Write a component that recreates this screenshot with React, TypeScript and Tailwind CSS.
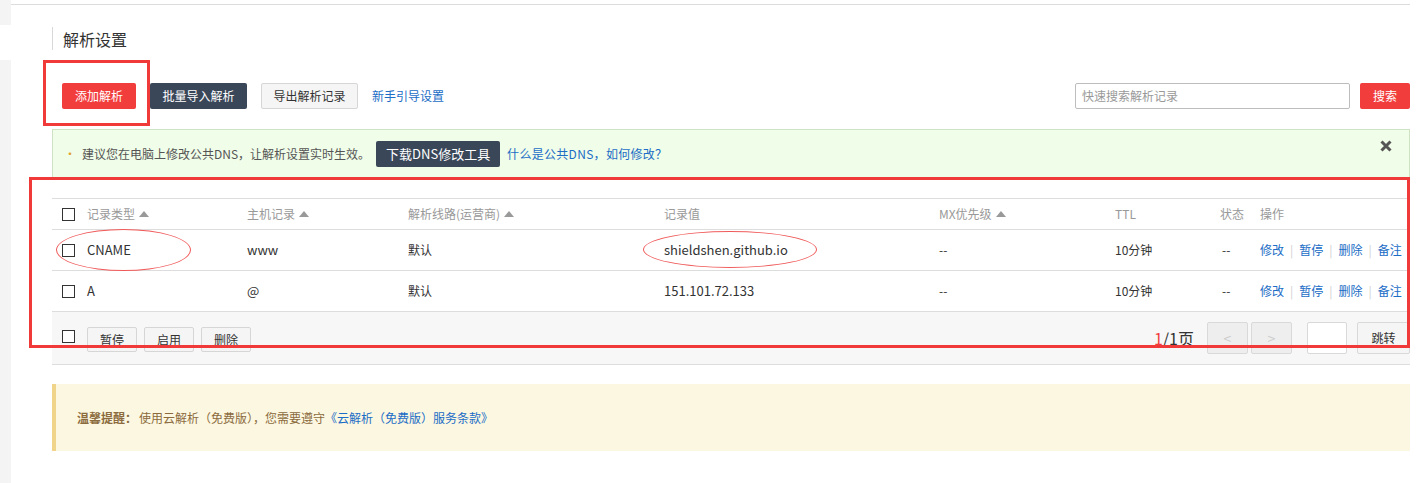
import React from 'react';

const font = { fontFamily: '"Noto Sans CJK SC", "Liberation Sans", sans-serif' };

const SortUp: React.FC = () => (
  <svg width="10" height="6" viewBox="0 0 10 6" className="ml-1 inline-block">
    <path d="M0 6 L5 0 L10 6 Z" fill="#999" />
  </svg>
);

const CheckBox: React.FC = () => (
  <span className="inline-block w-[13px] h-[13px] border border-[#333] bg-white" />
);

const cols = 'grid grid-cols-[35px_160px_161px_256px_275px_176px_105px_40px_1fr] items-center';

const records = [
  { type: 'CNAME', host: 'www', line: '默认', value: 'shieldshen.github.io', mx: '--', ttl: '10分钟', status: '--' },
  { type: 'A', host: '@', line: '默认', value: '151.101.72.133', mx: '--', ttl: '10分钟', status: '--' },
];

const Ops: React.FC = () => (
  <div className="flex items-center text-[#1b6dc6] whitespace-nowrap">
    <span>修改</span>
    <span className="mx-[6px] text-[#d0d0d0]">|</span>
    <span>暂停</span>
    <span className="mx-[6px] text-[#d0d0d0]">|</span>
    <span>删除</span>
    <span className="mx-[6px] text-[#d0d0d0]">|</span>
    <span>备注</span>
  </div>
);

export default function App() {
  return (
    <div className="relative w-[1421px] h-[483px] bg-white overflow-hidden flex text-[12px] text-[#333]" style={font}>
      {/* left strip */}
      <div className="w-[11px] flex flex-col">
        <div className="h-[25px] bg-[#f4f4f4]" />
        <div className="h-[35px] bg-white" />
        <div className="flex-1 bg-[#f4f4f4]" />
      </div>

      <div className="flex-1 pt-[4px] pr-[11px]">
        <div className="border-t border-[#dcdcdc] pl-[41px]">
          {/* title */}
          <div className="mt-[24px] h-[23px] border-l border-[#d8d8d8] pl-[10px] flex items-center text-[16px] text-[#333] -translate-y-[2px]">
            解析设置
          </div>

          {/* toolbar */}
          <div className="mt-[31px] flex items-center justify-between">
            <div className="flex items-center gap-[14px] pl-[10px]">
              <button className="w-[74px] h-[26px] bg-[#f23d3d] text-white rounded-[2px]">添加解析</button>
              <button className="w-[97px] h-[26px] bg-[#3a4759] text-white rounded-[2px]">批量导入解析</button>
              <button className="w-[97px] h-[26px] bg-[#f5f5f5] border border-[#d6d6d6] text-[#333] rounded-[2px]">导出解析记录</button>
              <span className="text-[#1b6dc6]">新手引导设置</span>
            </div>
            <div className="flex items-center gap-[10px]">
              <div className="w-[275px] h-[26px] border border-[#bdbdbd] rounded-[2px] flex items-center px-[6px] text-[#999]">
                快速搜索解析记录
              </div>
              <button className="w-[50px] h-[26px] bg-[#f23d3d] text-white rounded-[2px]">搜索</button>
            </div>
          </div>

          {/* dns banner */}
          <div className="mt-[20px] h-[50px] bg-[#f0fde8] border border-[#cfe2c3] flex items-center pl-[11px] pr-[12px]">
            <span className="text-[#e3a32b] mr-[6px]">•</span>
            <span className="text-[#555]">建议您在电脑上修改公共DNS，让解析设置实时生效。</span>
            <button className="ml-[6px] w-[124px] h-[26px] bg-[#3a4759] text-white rounded-[2px] text-[13px]">下载DNS修改工具</button>
            <span className="ml-[7px] text-[#1b6dc6] tracking-[0.3px]">什么是公共DNS，如何修改？</span>
            <svg width="12" height="12" viewBox="0 0 12 12" className="ml-auto -mt-[16px] mr-[5px]">
              <path d="M1.5 1.5 L10.5 10.5 M10.5 1.5 L1.5 10.5" stroke="#555" strokeWidth="3" />
            </svg>
          </div>

          {/* table */}
          <div className="mt-[19px] border-t border-[#ddd]">
            <div className={`${cols} h-[31px] border-b border-[#ddd] text-[#999]`}>
              <div className="pl-[10px] flex"><CheckBox /></div>
              <div className="flex items-center">记录类型<SortUp /></div>
              <div className="flex items-center">主机记录<SortUp /></div>
              <div className="flex items-center">解析线路(运营商)<SortUp /></div>
              <div>记录值</div>
              <div className="flex items-center">MX优先级<SortUp /></div>
              <div>TTL</div>
              <div>状态</div>
              <div>操作</div>
            </div>
            {records.map((r) => (
              <div key={r.type} className={`${cols} h-[41px] border-b border-[#ddd]`}>
                <div className="pl-[10px] flex"><CheckBox /></div>
                <div className="text-[13px]">{r.type}</div>
                <div className="text-[13px]">{r.host}</div>
                <div>{r.line}</div>
                <div className="text-[13px]">{r.value}</div>
                <div>{r.mx}</div>
                <div>{r.ttl}</div>
                <div className="pl-[2px]">{r.status}</div>
                <Ops />
              </div>
            ))}
            <div className="h-[53px] bg-[#f7f7f7] border-b border-[#ddd] flex items-center">
              <div className="w-[35px] pl-[10px] flex -mt-[4px]"><CheckBox /></div>
              <div className="flex items-center gap-[7px] mt-[3px]">
                <button className="w-[50px] h-[25px] border border-[#d6d6d6] bg-[#f5f5f5] rounded-[2px]">暂停</button>
                <button className="w-[50px] h-[25px] border border-[#d6d6d6] bg-[#f5f5f5] rounded-[2px]">启用</button>
                <button className="w-[50px] h-[25px] border border-[#d6d6d6] bg-[#f5f5f5] rounded-[2px]">删除</button>
              </div>
              <div className="ml-auto flex items-center">
                <span className="text-[16px] mr-[13px]"><span className="text-[#f23d3d]">1</span>/1页</span>
                <button className="w-[41px] h-[32px] border border-[#d9d9d9] bg-[#eeeeee] text-[#ccc] text-[14px] rounded-[2px]">&lt;</button>
                <button className="ml-[3px] w-[41px] h-[32px] border border-[#d9d9d9] bg-[#eeeeee] text-[#ccc] text-[14px] rounded-[2px]">&gt;</button>
                <div className="ml-[15px] w-[40px] h-[32px] border border-[#d9d9d9] bg-white rounded-[2px]" />
                <button className="ml-[10px] w-[53px] h-[32px] border border-[#d9d9d9] bg-[#f5f5f5] rounded-[2px]">跳转</button>
              </div>
            </div>
          </div>

          {/* notice */}
          <div className="mt-[19px] h-[67px] bg-[#fcf7e1] border-l-4 border-[#f0d48a] flex items-center pl-[21px] text-[#8b6b3d]">
            <span className="font-bold">温馨提醒：</span>
            <span className="ml-[2px]">使用云解析（免费版），您需要遵守</span>
            <span className="text-[#1b6dc6]">《云解析（免费版）服务条款》</span>
          </div>
        </div>
      </div>

      {/* annotations */}
      <div className="absolute left-[43px] top-[60px] w-[107px] h-[66px] border-[3px] border-[#f03a3a]" />
      <div className="absolute left-[29px] top-[177px] w-[1381px] h-[171px] border-[3px] border-[#f03a3a]" />
      <div className="absolute left-[56px] top-[229px] w-[135px] h-[42px] border border-[#f05a5a] rounded-[50%]" />
      <div className="absolute left-[643px] top-[231px] w-[174px] h-[37px] border border-[#f05a5a] rounded-[50%]" />
    </div>
  );
}
